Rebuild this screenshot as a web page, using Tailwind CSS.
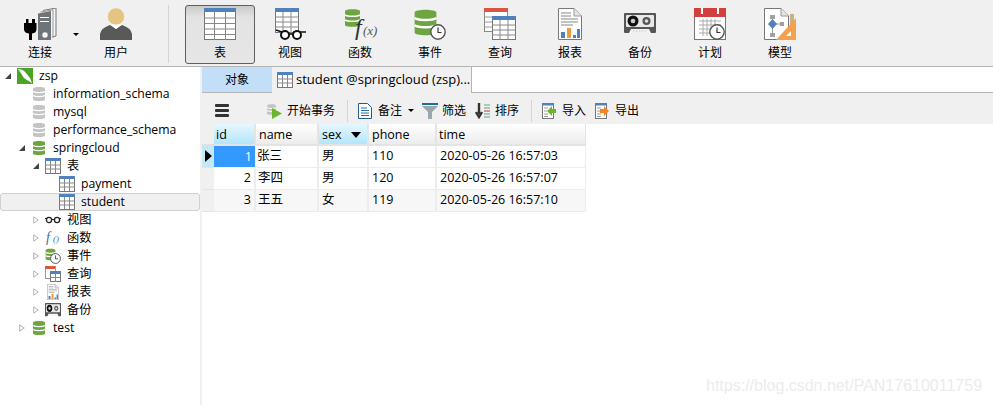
<!DOCTYPE html>
<html lang="zh">
<head>
  <meta charset="UTF-8" />
  <title>Navicat</title>
  <script src="https://cdn.jsdelivr.net/npm/@tailwindcss/browser@4"></script>
</head>
<body class="w-[993px] h-[405px] overflow-hidden bg-white text-[12px] text-black font-['Open_Sans','Noto_Sans_CJK_SC',sans-serif]">

  <!-- shared icons -->
  <svg width="0" height="0" class="absolute">
    <defs>
      <symbol id="tbl" viewBox="0 0 16 16">
        <rect x="0.5" y="0.5" width="15" height="15" fill="#fff" stroke="#777"/>
        <rect x="0" y="0" width="16" height="3" fill="#4f81bd"/>
        <path d="M0.5 7h15M0.5 11h15M5.5 3v12M10.5 3v12" stroke="#888" fill="none"/>
      </symbol>
      <symbol id="db-green" viewBox="0 0 12 16">
        <path d="M0 2.5C0 .5 12 .5 12 2.5V13.5C12 15.5 0 15.5 0 13.5Z" fill="#6ea540"/>
        <path d="M0 5.5C2 7 10 7 12 5.5M0 9.5C2 11 10 11 12 9.5" stroke="#fff" stroke-width="1.3" fill="none"/>
      </symbol>
      <symbol id="db-gray" viewBox="0 0 12 16">
        <path d="M0 2.5C0 .5 12 .5 12 2.5V13.5C12 15.5 0 15.5 0 13.5Z" fill="#c4c4c4"/>
        <path d="M0 5.5C2 7 10 7 12 5.5M0 9.5C2 11 10 11 12 9.5" stroke="#fff" stroke-width="1.3" fill="none"/>
      </symbol>
      <symbol id="clock" viewBox="0 0 16 16">
        <circle cx="8" cy="8" r="7.2" fill="#fff" stroke="#555" stroke-width="1.4"/>
        <path d="M8 3.5V8.5H11.5" stroke="#333" stroke-width="1.2" fill="none"/>
      </symbol>
      <symbol id="tape" viewBox="0 0 32 21">
        <path d="M1 0H31Q32 0 32 1V19Q32 20 31 20H27L25 16H7L5 20H1Q0 20 0 19V1Q0 0 1 0Z" fill="#555"/>
        <rect x="2" y="2" width="28" height="12" rx="1" fill="#e8e8e8"/>
        <circle cx="9" cy="8" r="5.5" fill="#111"/><circle cx="9" cy="8" r="2.3" fill="#ccc"/>
        <circle cx="22.5" cy="8" r="4" fill="#555"/><circle cx="22.5" cy="8" r="1.8" fill="#ddd"/>
        <path d="M9 18h14" stroke="#ccc" stroke-dasharray="1.5 1.5"/>
      </symbol>
      <symbol id="doc" viewBox="0 0 24 32">
        <path d="M.5 .5H16L23.5 8V31.5H.5Z" fill="#fff" stroke="#777"/>
        <path d="M16 .5V8H23.5" fill="#e5e5e5" stroke="#999"/>
        <path d="M3 5h10M3 8h10M3 11h17M3 14h17M3 17h12" stroke="#888"/>
        <rect x="3" y="24" width="4" height="6" fill="#4f81bd"/>
        <rect x="9" y="20" width="4" height="10" fill="#f09a3e"/>
        <rect x="15" y="27" width="3" height="3" fill="#4f81bd"/>
        <rect x="19" y="21" width="3" height="9" fill="#4f81bd"/>
      </symbol>
      <symbol id="tick" viewBox="0 0 8 10">
        <path d="M1 .8 7 5 1 9.2Z" fill="#fff" stroke="#999"/>
      </symbol>
      <symbol id="open" viewBox="0 0 8 8">
        <path d="M7 1V7H1Z" fill="#444"/>
      </symbol>
      <symbol id="imp" viewBox="0 0 14 16">
        <rect x=".5" y=".5" width="11" height="15" fill="#fff" stroke="#777"/>
        <rect x="0" y="0" width="12" height="2.5" fill="#4f81bd"/>
        <path d="M2 5h4M2 8h3M2 11h4M2 13.5h4" stroke="#999"/>
      </symbol>
    </defs>
  </svg>

  <!-- main toolbar -->
  <header class="h-[67px] bg-[#f0f0f0] border-b border-[#b4b4b4] flex items-start pl-[5px]">
    <div class="relative w-[70px] h-[66px] flex flex-col items-center pt-[8px]">
      <svg width="34" height="32" viewBox="0 0 34 32">
        <path d="M3 11h2.500v4h3.500v-4h3v4h1.500v6q0 4-4.500 4.500V32H6V25.500Q1 25 1 21V15H3Z" fill="#000"/>
        <path d="M20 2.500 33 0V28L29 29" fill="#f4f4f4" stroke="#777"/>
        <path d="M17.500 4 30 1.800V30" fill="none" stroke="#999"/>
        <path d="M15 5.500 28 3V32H15Z" fill="#6f7478"/>
        <path d="M17 9.500h9M17 13.500h9" stroke="#fff" stroke-width="1.200"/>
        <circle cx="22" cy="27" r="2.700" fill="#fff"/>
      </svg>
      <span class="mt-[5px] leading-[16px]">连接</span>
      <span class="absolute left-[68px] top-[33px] w-0 h-0 border-x-[3px] border-x-transparent border-t-[3px] border-t-black"></span>
    </div>
    <div class="ml-[6px] w-[70px] h-[66px] flex flex-col items-center pt-[8px]">
      <svg width="32" height="32" viewBox="0 0 32 32">
        <path d="M0 32V26Q1 20 10 17L16 21 22 17Q31 20 32 26V32Z" fill="#595959"/>
        <path d="M11 17 16 21 21 17 16 14Z" fill="#fff"/>
        <circle cx="16" cy="8.500" r="8.300" fill="#e6c583"/>
      </svg>
      <span class="mt-[5px] leading-[16px]">用户</span>
    </div>
    <div class="ml-[17px] mt-[5px] w-px h-[58px] bg-[#d4d4d4]"></div>
    <div class="ml-[16px] mt-[5px] w-[70px] h-[59px] flex flex-col items-center pt-[2px] rounded-[3px] border border-[#5f5f5f] bg-linear-to-b from-[#c9c9c9] via-[#e3e3e3] via-[20%] to-[#e6e6e6]">
      <svg width="32" height="32" viewBox="0 0 32 32">
        <rect x=".5" y=".5" width="31" height="31" fill="#fff" stroke="#777"/>
        <rect x="0" y="0" width="32" height="4" fill="#4f81bd"/>
        <path d="M.5 10h31M.5 15.500h31M.5 21h31M.5 26.500h31M10.500 4v28M21.500 4v28" stroke="#888"/>
      </svg>
      <span class="mt-[5px] leading-[16px]">表</span>
    </div>
    <div class="w-[70px] h-[66px] flex flex-col items-center pt-[8px]">
      <svg width="34" height="32" viewBox="0 0 34 32">
        <rect x="2.500" y=".5" width="23" height="24" fill="#fff" stroke="#777"/>
        <rect x="2" y="0" width="24" height="4" fill="#4f81bd"/>
        <path d="M2.500 9h23M2.500 14h23M2.500 19h23M10 4v21M18 4v21" stroke="#888"/>
        <path d="M3 22 9 24M20 24h13" stroke="#111" stroke-width="1.600"/>
        <circle cx="12" cy="27" r="4" fill="#fff" stroke="#111" stroke-width="2"/>
        <circle cx="24" cy="27" r="4" fill="#fff" stroke="#111" stroke-width="2"/>
        <path d="M15.500 26h5" stroke="#111" stroke-width="1.600"/>
      </svg>
      <span class="mt-[5px] leading-[16px]">视图</span>
    </div>
    <div class="w-[70px] h-[66px] flex flex-col items-center pt-[8px]">
      <svg width="34" height="32" viewBox="0 0 34 32" class="overflow-visible">
        <use href="#db-green" x="1" y="0" width="17" height="20" preserveAspectRatio="none"/>
        <text x="12" y="27" font-family="Liberation Serif" font-style="italic" font-size="24" fill="#333">f</text>
        <text x="20" y="27" font-family="Liberation Serif" font-style="italic" font-size="13" fill="#555">(x)</text>
      </svg>
      <span class="mt-[5px] leading-[16px]">函数</span>
    </div>
    <div class="w-[70px] h-[66px] flex flex-col items-center pt-[8px]">
      <svg width="32" height="32" viewBox="0 0 32 32">
        <use href="#db-green" x="0" y="0" width="23" height="29" preserveAspectRatio="none"/>
        <use href="#clock" x="16" y="16" width="16" height="16"/>
      </svg>
      <span class="mt-[5px] leading-[16px]">事件</span>
    </div>
    <div class="w-[70px] h-[66px] flex flex-col items-center pt-[8px]">
      <svg width="32" height="32" viewBox="0 0 32 32">
        <rect x=".5" y=".5" width="23" height="23" fill="#fff" stroke="#888"/>
        <rect x="0" y="0" width="24" height="4" fill="#d9573f"/>
        <path d="M.5 9h8M.5 14h8M.5 19h8" stroke="#999"/>
        <rect x="8.500" y="8.500" width="23" height="23" fill="#fff" stroke="#777"/>
        <rect x="8" y="8" width="24" height="4" fill="#4f81bd"/>
        <path d="M8.500 17h23M8.500 22h23M8.500 27h23M16 12v20M24 12v20" stroke="#888"/>
      </svg>
      <span class="mt-[5px] leading-[16px]">查询</span>
    </div>
    <div class="w-[70px] h-[66px] flex flex-col items-center pt-[8px]">
      <svg width="24" height="32"><use href="#doc"/></svg>
      <span class="mt-[5px] leading-[16px]">报表</span>
    </div>
    <div class="w-[70px] h-[66px] flex flex-col items-center pt-[13px]">
      <svg width="32" height="21"><use href="#tape"/></svg>
      <span class="mt-[11px] leading-[16px]">备份</span>
    </div>
    <div class="w-[70px] h-[66px] flex flex-col items-center pt-[8px]">
      <svg width="32" height="32" viewBox="0 0 32 32">
        <rect x=".5" y=".5" width="31" height="31" fill="#fff" stroke="#777"/>
        <rect x="0" y="0" width="32" height="9" fill="#d13f3f"/>
        <path d="M8 0v6M24 0v6" stroke="#fff" stroke-width="2"/>
        <path d="M5 13h22M5 17h22M5 21h22M5 25h16M9 11v17M13 11v17M17 11v17M21 11v17" stroke="#aaa"/>
        <use href="#clock" x="15" y="16" width="16" height="16"/>
      </svg>
      <span class="mt-[5px] leading-[16px]">计划</span>
    </div>
    <div class="w-[70px] h-[66px] flex flex-col items-center pt-[8px]">
      <svg width="32" height="32" viewBox="0 0 32 32">
        <path d="M.5 .5H17L24.500 8V31.500H.5Z" fill="#fff" stroke="#777"/>
        <path d="M17 .5V8H24.500" fill="#e5e5e5" stroke="#999"/>
        <path d="M6 7h5v4H6ZM6 25h5v4H6ZM16 14h4v4h-4Z" fill="#a0a0a0"/>
        <path d="M8.500 11v14M8.500 16h8" stroke="#999"/>
        <path d="M8.500 11 13 16 8.500 21 4 16Z" fill="#4f81bd"/>
        <rect x="26" y="6" width="4" height="14" fill="#c9b183"/>
        <path d="M32 10V32H12Z" fill="#f7a04b"/>
        <path d="M27 23V28H22Z" fill="#fff"/>
      </svg>
      <span class="mt-[5px] leading-[16px]">模型</span>
    </div>
  </header>

  <div class="flex h-[338px]">
    <!-- connection tree -->
    <aside class="w-[200px] shrink-0 text-[12.2px] leading-[18px]">
      <div class="h-[18px] flex items-center pl-[4px]">
        <svg width="8" height="8" class="mr-[5px]"><use href="#open"/></svg>
        <svg width="16" height="16" viewBox="0 0 16 16" class="mr-[6px]">
          <rect width="16" height="16" fill="#4aa524"/>
          <path d="M1 1Q6 1 9 5T13 10L15 15 10 12Q6 10 4.500 6Z" fill="#fff"/>
        </svg>
        <span>zsp</span>
      </div>
      <div class="h-[18px] flex items-center pl-[33px]"><svg width="12" height="16" class="mr-[8px]"><use href="#db-gray"/></svg><span>information_schema</span></div>
      <div class="h-[18px] flex items-center pl-[33px]"><svg width="12" height="16" class="mr-[8px]"><use href="#db-gray"/></svg><span>mysql</span></div>
      <div class="h-[18px] flex items-center pl-[33px]"><svg width="12" height="16" class="mr-[8px]"><use href="#db-gray"/></svg><span>performance_schema</span></div>
      <div class="h-[18px] flex items-center pl-[18px]"><svg width="8" height="8" class="mr-[7px]"><use href="#open"/></svg><svg width="12" height="16" class="mr-[8px]"><use href="#db-green"/></svg><span>springcloud</span></div>
      <div class="h-[18px] flex items-center pl-[32px]"><svg width="8" height="8" class="mr-[5px]"><use href="#open"/></svg><svg width="16" height="16" class="mr-[6px]"><use href="#tbl"/></svg><span>表</span></div>
      <div class="h-[18px] flex items-center pl-[59px]"><svg width="16" height="16" class="mr-[6px]"><use href="#tbl"/></svg><span>payment</span></div>
      <div class="h-[18px] flex items-center pl-[58px] border border-[#d0d0d0] rounded-[3px] bg-[#f0f0f0]"><svg width="16" height="16" class="mr-[6px]"><use href="#tbl"/></svg><span>student</span></div>
      <div class="h-[18px] flex items-center pl-[33px]"><svg width="6" height="10" class="mr-[6px]"><use href="#tick"/></svg>
        <svg width="16" height="16" viewBox="0 0 16 16" class="mr-[6px]"><circle cx="4" cy="8" r="2.600" fill="#fff" stroke="#222" stroke-width="1.300"/><circle cx="12" cy="8" r="2.600" fill="#fff" stroke="#222" stroke-width="1.300"/><path d="M6.500 7.500h3M0 6.500 2 6.500M14 6.500h2" stroke="#222"/></svg><span>视图</span></div>
      <div class="h-[18px] flex items-center pl-[33px]"><svg width="6" height="10" class="mr-[6px]"><use href="#tick"/></svg>
        <svg width="16" height="16" viewBox="0 0 16 16" class="mr-[6px]"><text x="1" y="12" font-family="Liberation Serif" font-style="italic" font-size="14" fill="#3f6f9f">f</text><text x="8" y="12" font-family="Liberation Serif" font-style="italic" font-size="9" fill="#3f6f9f">()</text></svg><span>函数</span></div>
      <div class="h-[18px] flex items-center pl-[33px]"><svg width="6" height="10" class="mr-[6px]"><use href="#tick"/></svg>
        <svg width="16" height="16" viewBox="0 0 16 16" class="mr-[6px]"><use href="#db-green" x="0" y="0" width="11" height="13" preserveAspectRatio="none"/><use href="#clock" x="5" y="5" width="11" height="11"/></svg><span>事件</span></div>
      <div class="h-[18px] flex items-center pl-[33px]"><svg width="6" height="10" class="mr-[6px]"><use href="#tick"/></svg>
        <svg width="16" height="16" viewBox="0 0 16 16" class="mr-[6px]"><rect x=".5" y=".5" width="10" height="12" fill="#fff" stroke="#999"/><rect width="10" height="3" fill="#d9573f"/><rect x="5.500" y="5.500" width="10" height="10" fill="#fff" stroke="#777"/><rect x="5" y="5" width="11" height="3" fill="#4f81bd"/><path d="M5.500 11.500h10M10.500 8v8" stroke="#888"/></svg><span>查询</span></div>
      <div class="h-[18px] flex items-center pl-[33px]"><svg width="6" height="10" class="mr-[6px]"><use href="#tick"/></svg>
        <span class="w-[16px] mr-[6px] flex justify-center"><svg width="12" height="16"><use href="#doc"/></svg></span><span>报表</span></div>
      <div class="h-[18px] flex items-center pl-[33px]"><svg width="6" height="10" class="mr-[6px]"><use href="#tick"/></svg>
        <svg width="16" height="14" class="mr-[6px]" viewBox="0 0 32 21" preserveAspectRatio="none"><use href="#tape"/></svg><span>备份</span></div>
      <div class="h-[18px] flex items-center pl-[19px]"><svg width="6" height="10" class="mr-[8px]"><use href="#tick"/></svg><svg width="12" height="16" class="mr-[8px]"><use href="#db-green"/></svg><span>test</span></div>
    </aside>

    <main class="relative flex-1 border-l-2 border-[#f0f0f0]">
      <!-- tabs -->
      <div class="h-[26px] flex border-b border-[#b4b4b4]">
        <div class="w-[70px] bg-[#c3dff8] flex items-center justify-center">对象</div>
        <div class="w-[200px] -mb-px bg-[#f0f0f0] border-r border-[#b4b4b4] flex items-center pl-[5px] text-[13px] whitespace-nowrap">
          <svg width="16" height="16" class="mr-[3px]"><use href="#tbl"/></svg><span>student @springcloud (zsp)...</span>
        </div>
      </div>
      <!-- object toolbar -->
      <div class="h-[31px] pt-[4px] bg-[#f0f0f0] flex items-center">
        <div class="ml-[13px] w-[14px] flex flex-col gap-[2px]">
          <span class="h-[3px] rounded-[1px] bg-[#333]"></span><span class="h-[3px] rounded-[1px] bg-[#333]"></span><span class="h-[3px] rounded-[1px] bg-[#333]"></span>
        </div>
        <svg width="16" height="16" viewBox="0 0 16 16" class="ml-[38px]">
          <use href="#db-gray" x="0" y="0" width="9" height="13" preserveAspectRatio="none"/>
          <path d="M5 5 15 10.500 5 16Z" fill="#6cb52d"/>
        </svg>
        <span class="ml-[4px]">开始事务</span>
        <span class="ml-[12px] w-px h-[22px] bg-[#d4d4d4]"></span>
        <svg width="14" height="16" viewBox="0 0 14 16" class="ml-[10px]">
          <path d="M.5 .5H9.500L13.500 4.500V15.500H.5Z" fill="#fff" stroke="#1f5f8f"/>
          <path d="M3 5h6M3 7.500h8M3 10h8M3 12.500h8" stroke="#2a6f9f"/>
        </svg>
        <span class="ml-[6px]">备注</span>
        <span class="ml-[6px] w-0 h-0 border-x-[3px] border-x-transparent border-t-[3px] border-t-black"></span>
        <svg width="16" height="16" viewBox="0 0 16 16" class="ml-[8px]">
          <rect width="16" height="2" fill="#1f6f8f"/>
          <path d="M0 3H16L10 9V16H6V9Z" fill="#9aa7ad"/>
        </svg>
        <span class="ml-[4px]">筛选</span>
        <svg width="16" height="16" viewBox="0 0 16 16" class="ml-[9px]">
          <path d="M4 0V11M1 9 4 14 7 9" stroke="#333" stroke-width="2.400" fill="none"/>
          <path d="M9 2h6M9 5h6" stroke="#5aa58a"/><path d="M9 8h6" stroke="#d02b3c"/><path d="M9 11h6M9 14h6" stroke="#5aa58a"/>
        </svg>
        <span class="ml-[4px]">排序</span>
        <span class="ml-[12px] w-px h-[22px] bg-[#d4d4d4]"></span>
        <svg width="14" height="16" viewBox="0 0 14 16" class="ml-[10px]">
          <use href="#imp"/><path d="M14 6H10V3L5 8 10 13V10H14Z" fill="#6cb52d"/>
        </svg>
        <span class="ml-[6px]">导入</span>
        <svg width="14" height="16" viewBox="0 0 14 16" class="ml-[9px]">
          <use href="#imp"/><path d="M5 6H9V3L14 8 9 13V10H5Z" fill="#f5831f"/>
        </svg>
        <span class="ml-[6px]">导出</span>
      </div>

      <!-- data grid -->
      <table class="table-fixed border-collapse w-[383px] text-[12.5px] leading-[18px]">
        <colgroup>
          <col class="w-[12px]" /><col class="w-[41px]" /><col class="w-[63px]" /><col class="w-[50px]" /><col class="w-[68px]" /><col class="w-[149px]" />
        </colgroup>
        <thead>
          <tr class="h-[21px] text-left font-normal">
            <th class="p-0 font-normal bg-[#f0f0f0] border-b-2 border-[#e0e0e0]"></th>
            <th class="p-0 pl-[2px] pt-px font-normal bg-linear-to-b from-[#e6f7fe] to-[#b2e5fb] border-r-2 border-b-2 border-[#e4e4e4]">id</th>
            <th class="p-0 pl-[3px] pt-px font-normal bg-linear-to-b from-white to-[#ececec] border-r-2 border-b-2 border-[#e4e4e4]">name</th>
            <th class="p-0 pl-[3px] pt-px font-normal bg-linear-to-b from-[#e6f7fe] to-[#b2e5fb] border-r-2 border-b-2 border-[#e4e4e4]">
              <div class="flex items-center justify-between pr-[6px]"><span>sex</span><span class="w-0 h-0 border-x-[5px] border-x-transparent border-t-[6px] border-t-black"></span></div>
            </th>
            <th class="p-0 pl-[3px] pt-px font-normal bg-linear-to-b from-white to-[#ececec] border-r-2 border-b-2 border-[#e4e4e4]">phone</th>
            <th class="p-0 pl-[2px] pt-px font-normal bg-linear-to-b from-white to-[#ececec] border-r border-b-2 border-[#e4e4e4]">time</th>
          </tr>
        </thead>
        <tbody>
          <tr class="h-[22px]">
            <td class="p-0 bg-[#c5e8f7] border-b border-[#e4e4e4]"><span class="block ml-[3px] w-0 h-0 border-y-[6px] border-y-transparent border-l-[7px] border-l-black"></span></td>
            <td class="p-0 pr-[3px] text-right text-white bg-[#3399ff]">1</td>
            <td class="p-0 pl-[2px] border-r-2 border-b border-[#ededed]">张三</td>
            <td class="p-0 pl-[3px] border-r-2 border-b border-[#ededed]">男</td>
            <td class="p-0 pl-[3px] border-r-2 border-b border-[#ededed]">110</td>
            <td class="p-0 pl-[3px] border-r border-b border-[#ededed]">2020-05-26 16:57:03</td>
          </tr>
          <tr class="h-[22px] bg-[#fff]">
            <td class="p-0 bg-[#f0f0f0] border-b border-[#e4e4e4]"></td>
            <td class="p-0 pr-[3px] text-right border-r-2 border-b border-[#ededed]">2</td>
            <td class="p-0 pl-[2px] border-r-2 border-b border-[#ededed]">李四</td>
            <td class="p-0 pl-[3px] border-r-2 border-b border-[#ededed]">男</td>
            <td class="p-0 pl-[3px] border-r-2 border-b border-[#ededed]">120</td>
            <td class="p-0 pl-[3px] border-r border-b border-[#ededed]">2020-05-26 16:57:07</td>
          </tr>
          <tr class="h-[22px] bg-[#f7f7f7]">
            <td class="p-0 bg-[#f0f0f0] border-b border-[#e4e4e4]"></td>
            <td class="p-0 pr-[3px] text-right border-r-2 border-b border-[#ededed]">3</td>
            <td class="p-0 pl-[2px] border-r-2 border-b border-[#ededed]">王五</td>
            <td class="p-0 pl-[3px] border-r-2 border-b border-[#ededed]">女</td>
            <td class="p-0 pl-[3px] border-r-2 border-b border-[#ededed]">119</td>
            <td class="p-0 pl-[3px] border-r border-b border-[#ededed]">2020-05-26 16:57:10</td>
          </tr>
        </tbody>
      </table>

      <!-- watermark -->
      <span class="absolute left-[504px] top-[308px] text-[16px] leading-[22px] text-[#ececec] font-['Liberation_Sans',sans-serif] whitespace-nowrap">https://blog.csdn.net/PAN17610011759</span>
    </main>
  </div>
</body>
</html>
